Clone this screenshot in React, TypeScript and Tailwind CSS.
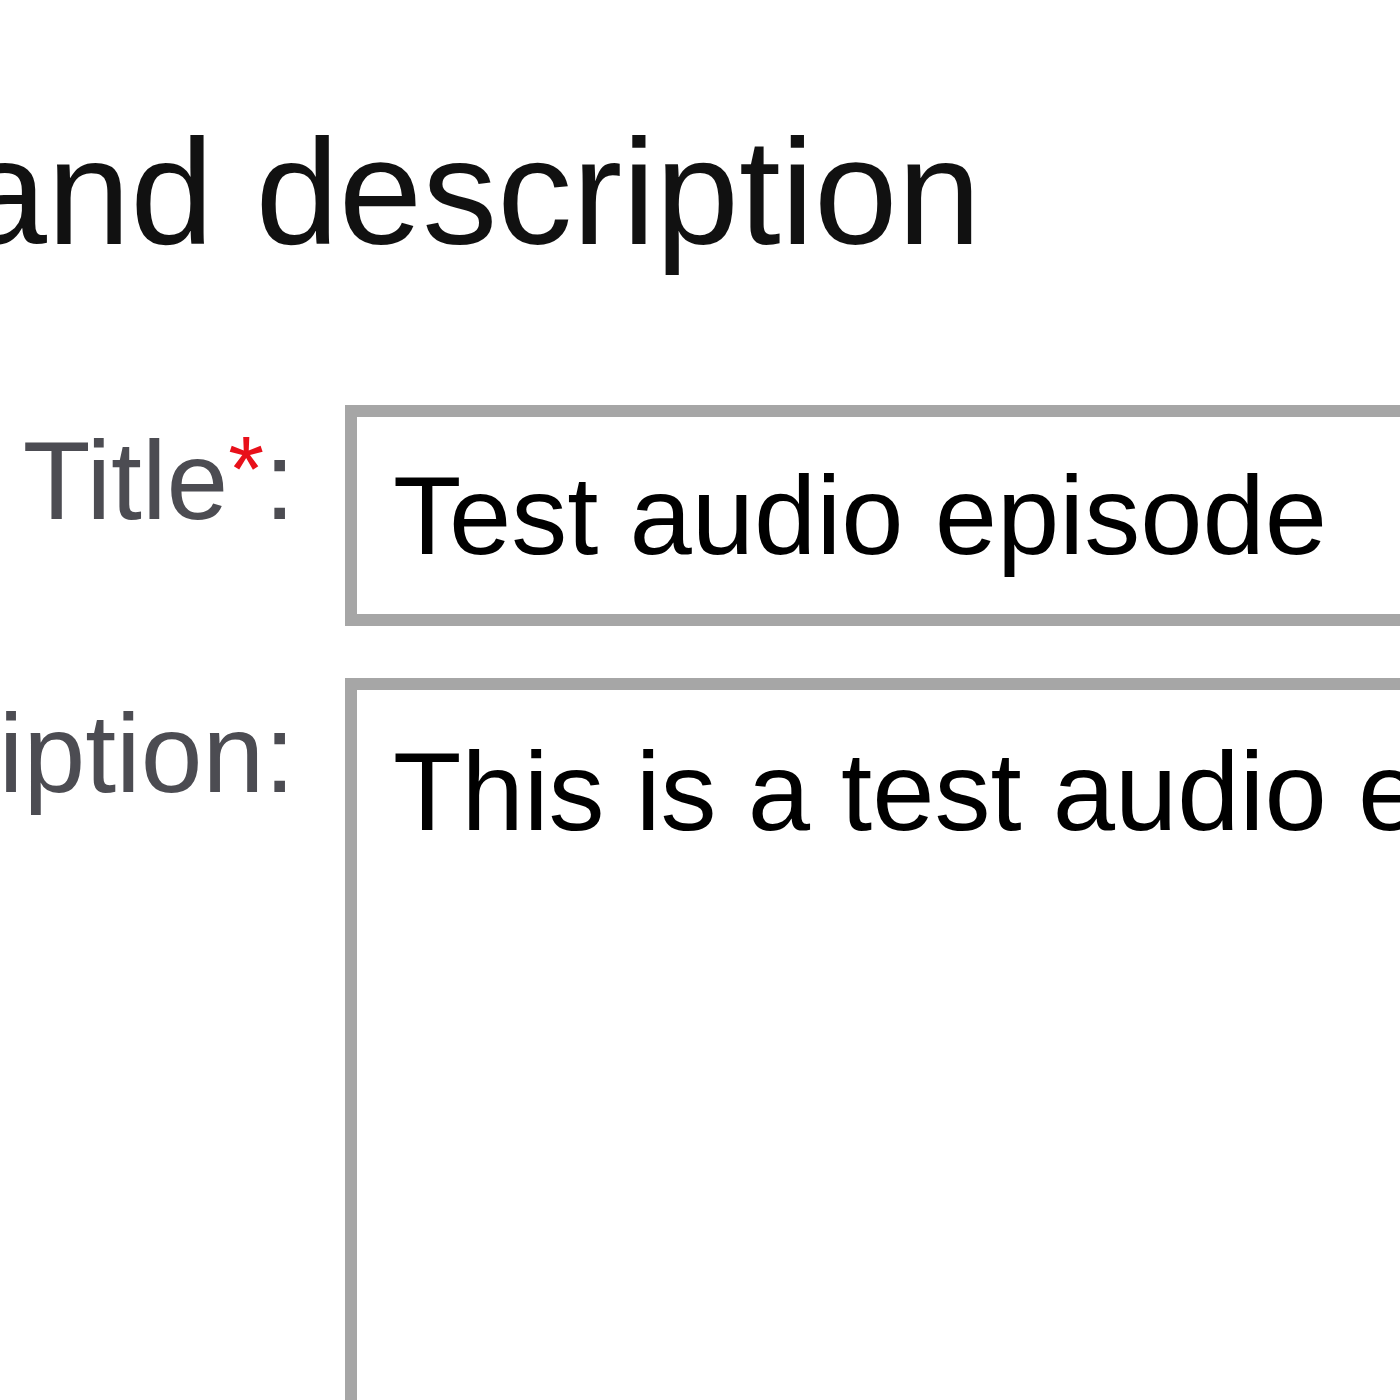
import type { ReactNode } from 'react';

function FieldRow({ label, required, children }: { label: string; required?: boolean; children: ReactNode }) {
  return (
    <div className="flex items-start gap-[50px]">
      <div className="-mt-[7px] flex w-[295px] shrink-0 justify-end">
        <label className="shrink-0 whitespace-nowrap text-[111px] leading-normal text-[#4c4c52]">
          {label}
          {required && <span className="align-[18px] text-[92px] text-[#e8101a]">*</span>}:
        </label>
      </div>
      {children}
    </div>
  );
}

export default function App() {
  return (
    <div className="h-[1400px] w-[1400px] overflow-hidden bg-white font-['Liberation_Sans',Arial,sans-serif]">
      <h2 className="-ml-[356px] mt-[117px] whitespace-nowrap text-[150px] leading-[150px] font-normal text-[#111]">
        Title and description
      </h2>
      <div className="mt-[138px] flex flex-col gap-[52px]">
        <FieldRow label="Title" required>
          <input
            readOnly
            value="Test audio episode"
            className="h-[221px] w-[1400px] shrink-0 border-[12px] border-[#a6a6a6] bg-white px-[36px] text-[112px] text-black outline-none"
          />
        </FieldRow>
        <FieldRow label="Description">
          <textarea
            readOnly
            value="This is a test audio episode."
            className="h-[900px] w-[2000px] shrink-0 resize-none overflow-hidden border-[12px] border-[#a6a6a6] bg-white px-[36px] pt-[18px] text-[112px] leading-normal text-black outline-none"
          />
        </FieldRow>
      </div>
    </div>
  );
}
